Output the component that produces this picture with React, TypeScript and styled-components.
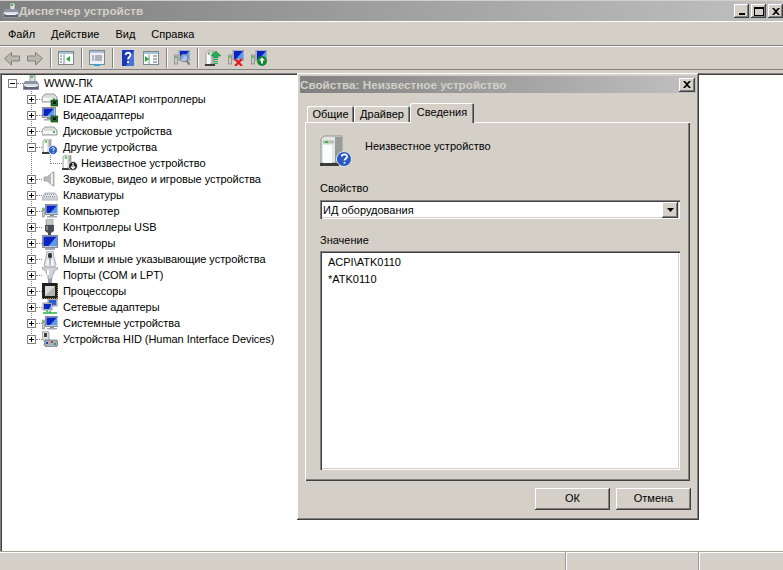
import React from "react";
import styled, { createGlobalStyle } from "styled-components";

const GlobalStyle = createGlobalStyle`
  html, body {
    margin: 0;
    background: #fff;
    overflow: hidden;
  }
  * {
    box-sizing: border-box;
  }
`;

const raised = `box-shadow: inset -1px -1px #404040, inset 1px 1px #fff, inset -2px -2px #808080;`;
const sunken = `box-shadow: inset 1px 1px #808080, inset 2px 2px #404040, inset -1px -1px #fff, inset -2px -2px #d4d0c8;`;

const Window = styled.div`
  position: relative;
  width: 783px;
  height: 570px;
  display: flex;
  flex-direction: column;
  background: #d4d0c8;
  color: #000;
  font: 11px/14px "Liberation Sans", Arial, sans-serif;
`;

const TitleBar = styled.div`
  margin-top: 1px;
  height: 20px;
  padding: 0 0 0 3px;
  display: flex;
  align-items: center;
  background: linear-gradient(to right, #808080, #c0c0c0);
`;

const TitleText = styled.span`
  font-weight: bold;
  font-size: 11.7px;
  color: #d4d0c8;
`;

const CaptionButtons = styled.div`
  margin-left: auto;
  display: flex;
  gap: 2px;
`;

const CaptionButton = styled.div`
  width: 15px;
  height: 14px;
  display: flex;
  align-items: center;
  justify-content: center;
  background: #d4d0c8;
  ${raised}
`;

const DialogClose = styled(CaptionButton)`
  width: 16px;
`;

const MenuBar = styled.div`
  height: 25px;
  display: flex;
  align-items: center;
  border-top: 1px solid #fff;
  border-bottom: 1px solid #808080;
`;

const MenuItem = styled.span`
  padding: 0 8px;
`;

const Toolbar = styled.div`
  height: 24px;
  padding-left: 4px;
  display: flex;
  align-items: center;
  gap: 7px;
  border-top: 1px solid #fff;
  border-bottom: 1px solid #808080;
`;

const ToolSep = styled.div`
  width: 1px;
  height: 20px;
  background: #808080;
  box-shadow: 1px 0 #fff;
`;

const TreePane = styled.div`
  flex: 1;
  margin-top: 3px;
  padding: 2px 0 0 2px;
  background: #fff;
  box-shadow: inset 1px 1px #808080, inset 2px 2px #404040;
`;

const Row = styled.div<{ $level: number }>`
  height: 16px;
  display: flex;
  align-items: center;
  white-space: nowrap;
  padding-left: ${(p) => [6, 25, 48][p.$level]}px;
`;

const Expander = styled.div<{ $open?: boolean }>`
  flex: none;
  width: 9px;
  height: 9px;
  border: 1px solid #808080;
  background-color: #fff;
  background-image: linear-gradient(#000, #000)
    ${(p) => (p.$open ? "" : ", linear-gradient(#000, #000)")};
  background-repeat: no-repeat;
  background-size: 5px 1px ${(p) => (p.$open ? "" : ", 1px 5px")};
  background-position: 1px 3px ${(p) => (p.$open ? "" : ", 3px 1px")};
`;

const Connector = styled.div<{ $long?: boolean }>`
  flex: none;
  width: ${(p) => (p.$long ? 12 : 6)}px;
  border-top: 1px dotted #808080;
`;

const RowLabel = styled.span<{ $tight?: boolean }>`
  margin-left: ${(p) => (p.$tight ? 3 : 5)}px;
  letter-spacing: -0.05px;
`;

const dots = `repeating-linear-gradient(to bottom, #808080 0 1px, transparent 1px 2px)`;

const TreeBranch = styled.div`
  background-image: ${dots};
  background-repeat: no-repeat;
  background-position: 29px 0;
  background-size: 1px calc(100% - 8px);
`;

const TreeLeaves = styled.div`
  background-image: ${dots};
  background-repeat: no-repeat;
  background-position: 48px 0;
  background-size: 1px 8px;
`;

const StatusBar = styled.div`
  height: 19px;
  display: flex;
  border-top: 1px solid #a8a498;
  box-shadow: inset 0 1px #fff;
`;

const StatusPane = styled.div<{ $width: number }>`
  width: ${(p) => p.$width}px;
  box-shadow: inset -1px 0 #fff, inset -2px 0 #a09c94;
`;

/* dialog window, floats over the tree */
const Dialog = styled.div`
  position: absolute;
  left: 297px;
  top: 73px;
  width: 402px;
  height: 447px;
  padding: 3px;
  display: flex;
  flex-direction: column;
  background: #d4d0c8;
  box-shadow: inset -1px -1px #404040, inset 1px 1px #fff, inset -2px -2px #808080;
`;

const DialogTitle = styled.div`
  flex: none;
  height: 17px;
  padding: 0 1px 0 0;
  display: flex;
  align-items: center;
  justify-content: space-between;
  background: linear-gradient(to right, #808080, #c0c0c0);
`;

const TabStrip = styled.div`
  margin-top: 10px;
  padding-left: 7px;
  height: 19px;
  display: flex;
  align-items: flex-end;
  position: relative;
  z-index: 1;
`;

const Tab = styled.div<{ $active?: boolean; $width: number }>`
  width: ${(p) => p.$width}px;
  height: ${(p) => (p.$active ? 20 : 16)}px;
  padding-top: ${(p) => (p.$active ? 2 : 1)}px;
  text-align: center;
  background: #d4d0c8;
  border-radius: 2px 2px 0 0;
  box-shadow: inset 1px 1px #fff, inset -1px 0 #404040, inset -2px 0 #808080;
  margin-bottom: ${(p) => (p.$active ? -1 : 0)}px;
`;

const TabPanel = styled.div`
  flex: none;
  width: 385px;
  height: 359px;
  margin-left: 5px;
  padding: 13px 10px 0 15px;
  box-shadow: inset 1px 1px #fff, inset -1px -1px #404040, inset -2px -2px #808080;
`;

const DeviceHead = styled.div`
  height: 32px;
  display: flex;
  gap: 13px;
`;

const DeviceName = styled.span`
  padding-top: 4px;
`;

const FieldLabel = styled.div<{ $gap: number }>`
  margin-top: 14px;
  margin-bottom: ${(p) => p.$gap}px;
`;

const SelectBox = styled.div`
  height: 19px;
  padding: 0 2px 0 3px;
  display: flex;
  align-items: center;
  justify-content: space-between;
  background: #fff;
  ${sunken}
`;

const SelectArrow = styled.div`
  width: 16px;
  height: 16px;
  display: flex;
  align-items: center;
  justify-content: center;
  background: #d4d0c8;
  ${raised}
`;

const ValueList = styled.div`
  height: 219px;
  padding: 3px 8px;
  background: #fff;
  ${sunken}
`;

const ValueItem = styled.div`
  height: 17px;
  line-height: 17px;
`;

const ButtonRow = styled.div`
  margin-top: 7px;
  padding-right: 5px;
  display: flex;
  justify-content: flex-end;
  gap: 6px;
`;

const DialogButton = styled.div`
  width: 75px;
  height: 22px;
  padding-bottom: 2px;
  display: flex;
  align-items: center;
  justify-content: center;
  background: #d4d0c8;
  ${raised}
`;

const Glyph = styled.svg`
  flex: none;
  display: block;
`;

const Ico = ({ size = 16, box = 16, children }: { size?: number; box?: number; children: React.ReactNode }) => (
  <Glyph width={size} height={size} viewBox={`0 0 ${box} ${box}`}>
    {children}
  </Glyph>
);

/* small parts the device icons are built from */
const Tower = ({ x = 0, y = 0 }: { x?: number; y?: number }) => (
  <g transform={`translate(${x} ${y})`}>
    <path d="M0 2l2-2h6v13H0z" fill="#e6e8e6" stroke="#8c908c" strokeWidth=".7" />
    <rect x="5.500" y="1" width="2.500" height="12" fill="#a4a8a4" />
    <rect x="1" y="4" width="3" height="9" fill="#fff" />
    <rect x="2" y="1.500" width="2" height="2" fill="#3cc03c" />
    <rect x="-1" y="13" width="10" height="2" fill="#3c3c3c" />
  </g>
);

const Screen = ({ x = 0, y = 0 }: { x?: number; y?: number }) => (
  <g transform={`translate(${x} ${y})`}>
    <rect x=".4" y=".4" width="13" height="10" fill="#c4c8d0" stroke="#70788c" strokeWidth=".8" />
    <rect x="1.500" y="1.500" width="10.500" height="7.500" fill="#0a24c4" />
    <path d="M12 1.500V9H5z" fill="#5a9cf0" />
    <rect x="5" y="11" width="4" height="1" fill="#8c909c" />
    <rect x="2" y="12" width="10" height="1.500" fill="#a4a8b4" />
  </g>
);

const Drive = ({ y = 0 }: { y?: number }) => (
  <g transform={`translate(0 ${y})`}>
    <path d="M3 0h9l3 3v5H0V3z" fill="#dcdedc" stroke="#84888c" strokeWidth=".8" />
    <path d="M1 4h13v3H1z" fill="#f6f6f6" />
    <rect x="11" y="4" width="2" height="2" fill="#4cc04c" />
  </g>
);

const Chip = ({ x = 0, y = 0 }: { x?: number; y?: number }) => (
  <g transform={`translate(${x} ${y})`}>
    <rect width="7" height="6" fill="#1e6e34" stroke="#0c3c1c" strokeWidth=".6" />
    <rect x="2" y="1.500" width="3" height="2.500" fill="#101810" />
    <path d="M0 6.500h7" stroke="#d8b840" strokeDasharray="1 1" />
  </g>
);

const Badge = ({ cx, cy, r, fill }: { cx: number; cy: number; r: number; fill: string }) => (
  <circle cx={cx} cy={cy} r={r} fill={fill} stroke="#fff" strokeWidth=".8" />
);

const RootIcon = () => (
  <Ico>
    <rect x="7" y="0" width="5" height="7" fill="#dfe2df" stroke="#70747c" strokeWidth=".7" />
    <rect x="8" y="1" width="2" height="2" fill="#3cc03c" />
    <path d="M2 6h12l2 3v6H0V9z" fill="#8c94a4" />
    <path d="M1 9h14v2H1z" fill="#dce0e4" />
    <path d="M1 12h14v2H1z" fill="#5c6474" />
    <rect x="3" y="11" width="10" height="1" fill="#f4f4f4" />
  </Ico>
);
const IdeIcon = () => (
  <Ico>
    <Drive y={3} />
    <Chip x={9} y={9} />
  </Ico>
);
const VideoIcon = () => (
  <Ico>
    <Screen x={0} y={0} />
    <Chip x={9} y={9} />
  </Ico>
);
const DiskIcon = () => (
  <Ico>
    <Drive y={4} />
  </Ico>
);
const OtherIcon = () => (
  <Ico>
    <Tower x={1} y={0} />
    <Badge cx={11} cy={11} r={4.500} fill="#2c5cc8" />
    <path d="M9.600 9.600c.4-1.400 3-1.200 2.800.4-.1.900-1.400 1-1.400 2m0 .8v1" fill="none" stroke="#fff" strokeWidth="1" />
  </Ico>
);
const UnknownIcon = () => (
  <Ico>
    <Tower x={1} y={0} />
    <Badge cx={11} cy={11} r={4.500} fill="#282828" />
    <path d="M11 8v5.500M9 11.500l2 2.200 2-2.200" fill="none" stroke="#fff" strokeWidth="1.200" />
  </Ico>
);
const SoundIcon = () => (
  <Ico>
    <path d="M2 6h3l6-5h1v14h-1l-6-5H2z" fill="#b8bcb8" stroke="#888c88" strokeWidth=".6" />
    <path d="M9 3l2-1v12l-2-1z" fill="#f0f0f0" />
  </Ico>
);
const KeyboardIcon = () => (
  <Ico>
    <path d="M0 11l3-5h10l3 5v2H0z" fill="#e4e6ea" stroke="#8c94a0" strokeWidth=".7" />
    <path d="M3 7.500h10M2 9.500h12M1.500 11h13" stroke="#8490a0" strokeDasharray="1 1" />
  </Ico>
);
const ComputerIcon = () => (
  <Ico>
    <rect x=".4" y="5" width="2" height="9" fill="#c8ccc8" stroke="#6c706c" strokeWidth=".5" />
    <rect x=".8" y="6" width="1.200" height="2" fill="#3cc03c" />
    <Screen x={3} y={1} />
  </Ico>
);
const UsbIcon = () => (
  <Ico>
    <rect x="4" y="0" width="7" height="6" fill="#c4c8c4" stroke="#8c908c" strokeWidth=".6" />
    <path d="M3 6h9v6l-3 2v2H6v-2l-3-2z" fill="#4a4e54" />
    <rect x="4" y="7" width="2" height="4" fill="#80848c" />
  </Ico>
);
const MonitorIcon = () => (
  <Ico>
    <rect x=".4" y=".4" width="15.200" height="12" fill="#c4c8d0" stroke="#70788c" strokeWidth=".8" />
    <rect x="1.500" y="1.500" width="13" height="9.500" fill="#0a24c4" />
    <path d="M14.500 1.500V11h-8z" fill="#5a9cf0" />
    <rect x="3" y="13" width="10" height="2" fill="#a4a8b4" />
  </Ico>
);
const MouseIcon = () => (
  <Ico>
    <path d="M5 0h6l1 6 2 8-1 2H3l-1-2 2-8z" fill="#dfe1e4" stroke="#8c9096" strokeWidth=".7" />
    <rect x="6" y="2" width="4" height="5" rx="1.500" fill="#34383c" />
    <path d="M5 9h6v5H5z" fill="#fafafa" />
    <path d="M8 7v7" stroke="#74787c" />
  </Ico>
);
const PortIcon = () => (
  <Ico>
    <path d="M0 0h16v2l-4 2v2l-2 3v3H6V9L4 6V4L0 2z" fill="#d0d4d8" stroke="#7c8088" strokeWidth=".6" />
    <rect x="5" y="3" width="2" height="5" fill="#fff" />
    <path d="M6 12h4v4H6z" fill="#9ca0a4" />
  </Ico>
);
const CpuIcon = () => (
  <Ico>
    <rect x="0" y="0" width="16" height="16" fill="#202020" />
    <rect x="3" y="3" width="10" height="10" fill="#b4b4b4" />
    <path d="M3 3h10L3 13z" fill="#d8d8d8" />
    <path d="M0 15.500h16M15.500 0v16" stroke="#c8a030" strokeDasharray="1 1" />
  </Ico>
);
const NetworkIcon = () => (
  <Ico>
    <rect x="6" y="0" width="9" height="7" fill="#c4c8d0" stroke="#70788c" strokeWidth=".7" />
    <rect x="7" y="1" width="7" height="5" fill="#2a5cd8" />
    <rect x="1" y="4" width="9" height="7" fill="#c4c8d0" stroke="#70788c" strokeWidth=".7" />
    <rect x="2" y="5" width="7" height="5" fill="#0a24c4" />
    <path d="M9 10H7l2-4z" fill="#6aa4f4" />
    <path d="M5 11v2M1 14h14M8 12v2" stroke="#28b048" strokeWidth="1.400" />
  </Ico>
);
const HidIcon = () => (
  <Ico>
    <path d="M1 0h5l1 3v6l-2 1H2L0 8V3z" fill="#d8dade" stroke="#7c8088" strokeWidth=".7" />
    <rect x="2" y="2" width="3" height="4" fill="#3c4044" />
    <path d="M3 9h12l1 5-2 2H4l-2-2z" fill="#a8b0bc" stroke="#5c6470" strokeWidth=".7" />
    <rect x="4" y="11" width="2" height="2" fill="#2038c0" />
    <rect x="9" y="10" width="2" height="2" fill="#d03030" />
    <rect x="12" y="12" width="2" height="2" fill="#30a040" />
  </Ico>
);

/* toolbar drawings */
const ArrowTool = ({ flip }: { flip?: boolean }) => (
  <Ico>
    <path
      d="M.5 8.500l7-6v3.500h8v5h-8V15z"
      fill="#b8b8b0"
      stroke="#808078"
      transform={flip ? "matrix(-1 0 0 1 16 0)" : undefined}
    />
  </Ico>
);
const PaneTool = ({ arrow }: { arrow: "left" | "right" }) => (
  <Ico>
    <rect x=".5" y="1.500" width="15" height="13" fill="#fff" stroke="#7c8890" />
    <rect x="1" y="2" width="14" height="2" fill="#a8c0d8" />
    <path d="M6 4.500v10" stroke="#7c8890" />
    <path d={arrow === "left" ? "M12 6v6L8 9z" : "M2 6v6l4-3z"} fill="#20b040" />
    <path d={arrow === "left" ? "M2 6h2M2 9h2M2 12h2" : "M10 6h4M10 9h4M10 12h4"} stroke="#506070" />
  </Ico>
);
const ListTool = () => (
  <Ico>
    <rect x=".5" y=".5" width="15" height="14" fill="#eef0f4" stroke="#7c8890" />
    <rect x="1" y="1" width="14" height="2" fill="#b0c0d0" />
    <path d="M3 6h2M6 6h7M3 8h2M6 8h7M3 10h2M6 10h7" stroke="#687888" />
    <rect x="5" y="14" width="6" height="2" fill="#30a0e0" />
  </Ico>
);
const HelpTool = () => (
  <Ico>
    <rect x="2" y="0" width="12" height="16" fill="#1838b8" />
    <path d="M14 0v16H6z" fill="#4c70d8" />
    <path d="M5.500 5c.5-3 5-3 5 0 0 2-2.500 2-2.500 4.500M8 11v2" fill="none" stroke="#fff" strokeWidth="1.800" />
  </Ico>
);
const MiniTower = () => (
  <g>
    <rect x=".5" y="5" width="3" height="9" fill="#c8ccc8" stroke="#70746c" strokeWidth=".6" />
    <rect x="1.200" y="6" width="1.500" height="2" fill="#3cc03c" />
  </g>
);
const MiniScreen = () => (
  <g>
    <rect x="5" y="0" width="11" height="10" fill="#c4c8d0" stroke="#70788c" strokeWidth=".7" />
    <rect x="6" y="1" width="9" height="8" fill="#0a24c4" />
    <path d="M15 1v8H8z" fill="#5a9cf0" />
  </g>
);
const ScanTool = () => (
  <Ico>
    <MiniTower />
    <MiniScreen />
    <circle cx="10" cy="8" r="3.800" fill="#b8d4f0" fillOpacity=".7" stroke="#7c8890" />
    <path d="M12.500 10.500l3 4" stroke="#687078" strokeWidth="1.800" />
  </Ico>
);
const UpdateTool = () => (
  <Ico>
    <Tower x={1} y={1} />
    <path d="M11 1l5 5h-3v2H9V6H6z" fill="#20b050" stroke="#108038" strokeWidth=".5" />
    <path d="M9 9h4v1H9zM9 11h4v1H9zM9 13h4v1H9z" fill="#20b050" />
  </Ico>
);
const RemoveTool = () => (
  <Ico>
    <MiniTower />
    <MiniScreen />
    <path d="M7 9l7 7M14 9l-7 7" stroke="#e01818" strokeWidth="2.200" />
  </Ico>
);
const AddTool = () => (
  <Ico>
    <MiniTower />
    <MiniScreen />
    <circle cx="11" cy="11" r="5" fill="#108830" />
    <path d="M11 7.500l3 3h-2v3h-2v-3H8z" fill="#fff" />
  </Ico>
);

/* big device icon of the details tab */
const BigUnknownIcon = () => (
  <Ico size={32} box={32}>
    <path d="M1 4l3-3h18v27H1z" fill="#e4e6e4" stroke="#909490" />
    <rect x="15" y="2" width="7" height="26" fill="#989c98" />
    <rect x="3" y="10" width="9" height="18" fill="#fcfcfc" />
    <path d="M3 7h11" stroke="#b8bcb8" strokeWidth="3" />
    <rect x="5" y="6" width="3" height="2" fill="#3cc03c" />
    <rect x="0" y="28" width="19" height="3" fill="#3a3a3a" />
    <circle cx="24" cy="24" r="7.500" fill="#2858c0" stroke="#dfe4f0" />
    <path d="M21.500 21.500c.5-3 6-3 5.500.5-.3 1.800-2.500 1.800-2.500 3.500m0 1.500v1.500" fill="none" stroke="#fff" strokeWidth="1.800" />
  </Ico>
);

const devices: { name: string; icon: React.ReactNode }[] = [
  { name: "IDE ATA/ATAPI контроллеры", icon: <IdeIcon /> },
  { name: "Видеоадаптеры", icon: <VideoIcon /> },
  { name: "Дисковые устройства", icon: <DiskIcon /> },
  { name: "Другие устройства", icon: <OtherIcon /> },
  { name: "Звуковые, видео и игровые устройства", icon: <SoundIcon /> },
  { name: "Клавиатуры", icon: <KeyboardIcon /> },
  { name: "Компьютер", icon: <ComputerIcon /> },
  { name: "Контроллеры USB", icon: <UsbIcon /> },
  { name: "Мониторы", icon: <MonitorIcon /> },
  { name: "Мыши и иные указывающие устройства", icon: <MouseIcon /> },
  { name: "Порты (COM и LPT)", icon: <PortIcon /> },
  { name: "Процессоры", icon: <CpuIcon /> },
  { name: "Сетевые адаптеры", icon: <NetworkIcon /> },
  { name: "Системные устройства", icon: <ComputerIcon /> },
  { name: "Устройства HID (Human Interface Devices)", icon: <HidIcon /> },
];

const CloseGlyph = () => (
  <Glyph width="8" height="7" viewBox="0 0 8 7">
    <path d="M0 0h2l2 2 2-2h2L5 3.500 8 7H6L4 5 2 7H0l3-3.500z" fill="#000" />
  </Glyph>
);

export default function App() {
  return (
    <Window>
      <GlobalStyle />
      <TitleBar>
        <RootIcon />
        <TitleText>Диспетчер устройств</TitleText>
        <CaptionButtons>
          <CaptionButton>
            <Glyph width="8" height="8" viewBox="0 0 8 8">
              <rect x="1" y="6" width="6" height="2" fill="#000" />
            </Glyph>
          </CaptionButton>
          <CaptionButton>
            <Glyph width="10" height="9" viewBox="0 0 10 9">
              <path d="M0 0h10v9H0z M1 2v6h8V2z" fill="#000" fillRule="evenodd" />
            </Glyph>
          </CaptionButton>
          <CaptionButton>
            <CloseGlyph />
          </CaptionButton>
        </CaptionButtons>
      </TitleBar>
      <MenuBar>
        <MenuItem>Файл</MenuItem>
        <MenuItem>Действие</MenuItem>
        <MenuItem>Вид</MenuItem>
        <MenuItem>Справка</MenuItem>
      </MenuBar>
      <Toolbar>
        <ArrowTool />
        <ArrowTool flip />
        <ToolSep />
        <PaneTool arrow="left" />
        <ToolSep />
        <ListTool />
        <ToolSep />
        <HelpTool />
        <PaneTool arrow="right" />
        <ToolSep />
        <ScanTool />
        <ToolSep />
        <UpdateTool />
        <RemoveTool />
        <AddTool />
      </Toolbar>
      <TreePane>
        <Row $level={0}>
          <Expander $open />
          <Connector />
          <RootIcon />
          <RowLabel>WWW-ПК</RowLabel>
        </Row>
        <TreeBranch>
          {devices.map((d) => (
            <React.Fragment key={d.name}>
              <Row $level={1}>
                <Expander $open={d.name === "Другие устройства"} />
                <Connector />
                {d.icon}
                <RowLabel>{d.name}</RowLabel>
              </Row>
              {d.name === "Другие устройства" && (
                <TreeLeaves>
                  <Row $level={2}>
                    <Connector $long />
                    <UnknownIcon />
                    <RowLabel $tight>Неизвестное устройство</RowLabel>
                  </Row>
                </TreeLeaves>
              )}
            </React.Fragment>
          ))}
        </TreeBranch>
      </TreePane>
      <StatusBar>
        <StatusPane $width={567} />
        <StatusPane $width={133} />
      </StatusBar>

      <Dialog>
        <DialogTitle>
          <TitleText>Свойства: Неизвестное устройство</TitleText>
          <DialogClose>
            <CloseGlyph />
          </DialogClose>
        </DialogTitle>
        <TabStrip>
          <Tab $width={47}>Общие</Tab>
          <Tab $width={56}>Драйвер</Tab>
          <Tab $active $width={64}>
            Сведения
          </Tab>
        </TabStrip>
        <TabPanel>
          <DeviceHead>
            <BigUnknownIcon />
            <DeviceName>Неизвестное устройство</DeviceName>
          </DeviceHead>
          <FieldLabel $gap={5}>Свойство</FieldLabel>
          <SelectBox>
            ИД оборудования
            <SelectArrow>
              <Glyph width="7" height="4" viewBox="0 0 7 4">
                <path d="M0 0h7L3.500 4z" fill="#000" />
              </Glyph>
            </SelectArrow>
          </SelectBox>
          <FieldLabel $gap={4}>Значение</FieldLabel>
          <ValueList>
            <ValueItem>ACPI\ATK0110</ValueItem>
            <ValueItem>*ATK0110</ValueItem>
          </ValueList>
        </TabPanel>
        <ButtonRow>
          <DialogButton>ОК</DialogButton>
          <DialogButton>Отмена</DialogButton>
        </ButtonRow>
      </Dialog>
    </Window>
  );
}
